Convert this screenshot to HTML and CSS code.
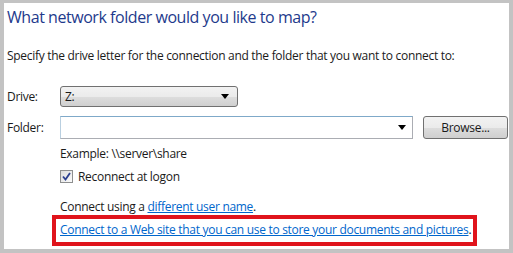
FILE: index.html
```html
<!DOCTYPE html>
<html>
<head>
<meta charset="utf-8">
<link rel="stylesheet" href="styles.css">
</head>
<body>
<div class="panel">
  <h1 class="title">What network folder would you like to map?</h1>
  <p class="intro">Specify the drive letter for the connection and the folder that you want to connect to:</p>
  <div class="form">
    <div class="row drive-row">
      <span class="label">Drive:</span>
      <div class="combo">
        <span class="combo-text">Z:</span>
        <span class="arrow"></span>
      </div>
    </div>
    <div class="row folder-row">
      <span class="label">Folder:</span>
      <div class="edit">
        <span class="arrow"></span>
      </div>
      <button class="browse">Browse...</button>
    </div>
    <div class="indent">
      <div class="example">Example: \\server\share</div>
      <label class="check-row">
        <span class="checkbox">
          <svg width="9" height="9" viewBox="0 0 9 9"><path d="M1 4.5 L3.5 7.5 L8 1" fill="none" stroke="#2b3f8f" stroke-width="1.8"/></svg>
        </span>
        <span>Reconnect at logon</span>
      </label>
      <div class="connect">Connect using a <a href="#">different user name</a>.</div>
    </div>
    <div class="highlight">
      <a href="#">Connect to a Web site that you can use to store your documents and pictures</a>.
    </div>
  </div>
</div>
</body>
</html>
```
FILE: styles.css
```css
html, body {
  margin: 0;
  padding: 0;
}
body {
  background: #c3c3c3;
  width: 513px;
  height: 253px;
  overflow: hidden;
  font-family: "Open Sans", "Noto Sans", sans-serif;
  font-size: 12px;
  letter-spacing: -0.3px;
  color: #1a1a1a;
}
.panel {
  margin: 3px 4px 0 4px;
  height: 246px;
  background: #ffffff;
  padding: 0 0 0 3px;
  box-sizing: border-box;
}
.title {
  margin: 0;
  padding-top: 4px;
  font-size: 16px;
  font-weight: normal;
  color: #1e3a8c;
  line-height: 20px;
  letter-spacing: -0.45px;
}
.intro {
  margin: 0;
  padding-top: 21px;
  line-height: 16px;
  white-space: nowrap;
}
.form {
  margin-top: 21px;
}
.row {
  display: flex;
  align-items: center;
}
.label {
  width: 53px;
  flex: none;
}
.drive-row {
  height: 22px;
}
.combo {
  width: 178px;
  height: 21px;
  box-sizing: border-box;
  border: 1px solid #707070;
  border-radius: 3px;
  background: linear-gradient(#f2f2f2 0%, #ebebeb 50%, #dddddd 51%, #cfcfcf 100%);
  display: flex;
  align-items: center;
  justify-content: space-between;
  padding: 0 8px 0 4px;
}
.arrow {
  width: 0;
  height: 0;
  border-left: 4px solid transparent;
  border-right: 4px solid transparent;
  border-top: 5px solid #000;
}
.folder-row {
  margin-top: 9px;
  height: 23px;
}
.edit {
  width: 353px;
  height: 23px;
  box-sizing: border-box;
  border: 1px solid #abadb3;
  border-top-color: #7fa9c9;
  border-left-color: #b9cfe0;
  display: flex;
  align-items: center;
  justify-content: flex-end;
  padding-right: 6px;
  background: #fff;
}
.browse {
  margin-left: 10px;
  width: 85px;
  height: 23px;
  border: 1px solid #707070;
  border-radius: 3px;
  background: linear-gradient(#f2f2f2 0%, #ebebeb 50%, #dddddd 51%, #cfcfcf 100%);
  font-family: inherit;
  font-size: 12px;
  letter-spacing: -0.3px;
  color: #1a1a1a;
  padding: 0;
}
.indent {
  padding-left: 53px;
}
.example {
  margin-top: 7px;
  line-height: 16px;
}
.check-row {
  display: flex;
  align-items: center;
  margin-top: 5px;
  height: 18px;
}
.checkbox {
  width: 13px;
  height: 13px;
  box-sizing: border-box;
  border: 1px solid #8e8f8f;
  background: linear-gradient(135deg, #dcdcdc, #fbfbfb);
  display: flex;
  align-items: center;
  justify-content: center;
  margin-right: 5px;
}
.connect {
  margin-top: 14px;
  line-height: 16px;
}
a {
  color: #0066cc;
  text-decoration: underline;
}
.highlight {
  margin: 0 0 0 45px;
  width: 425px;
  height: 31px;
  box-sizing: border-box;
  border: 4px solid #e0141c;
  padding: 3px 0 0 4px;
  line-height: 16px;
  white-space: nowrap;
}
```
